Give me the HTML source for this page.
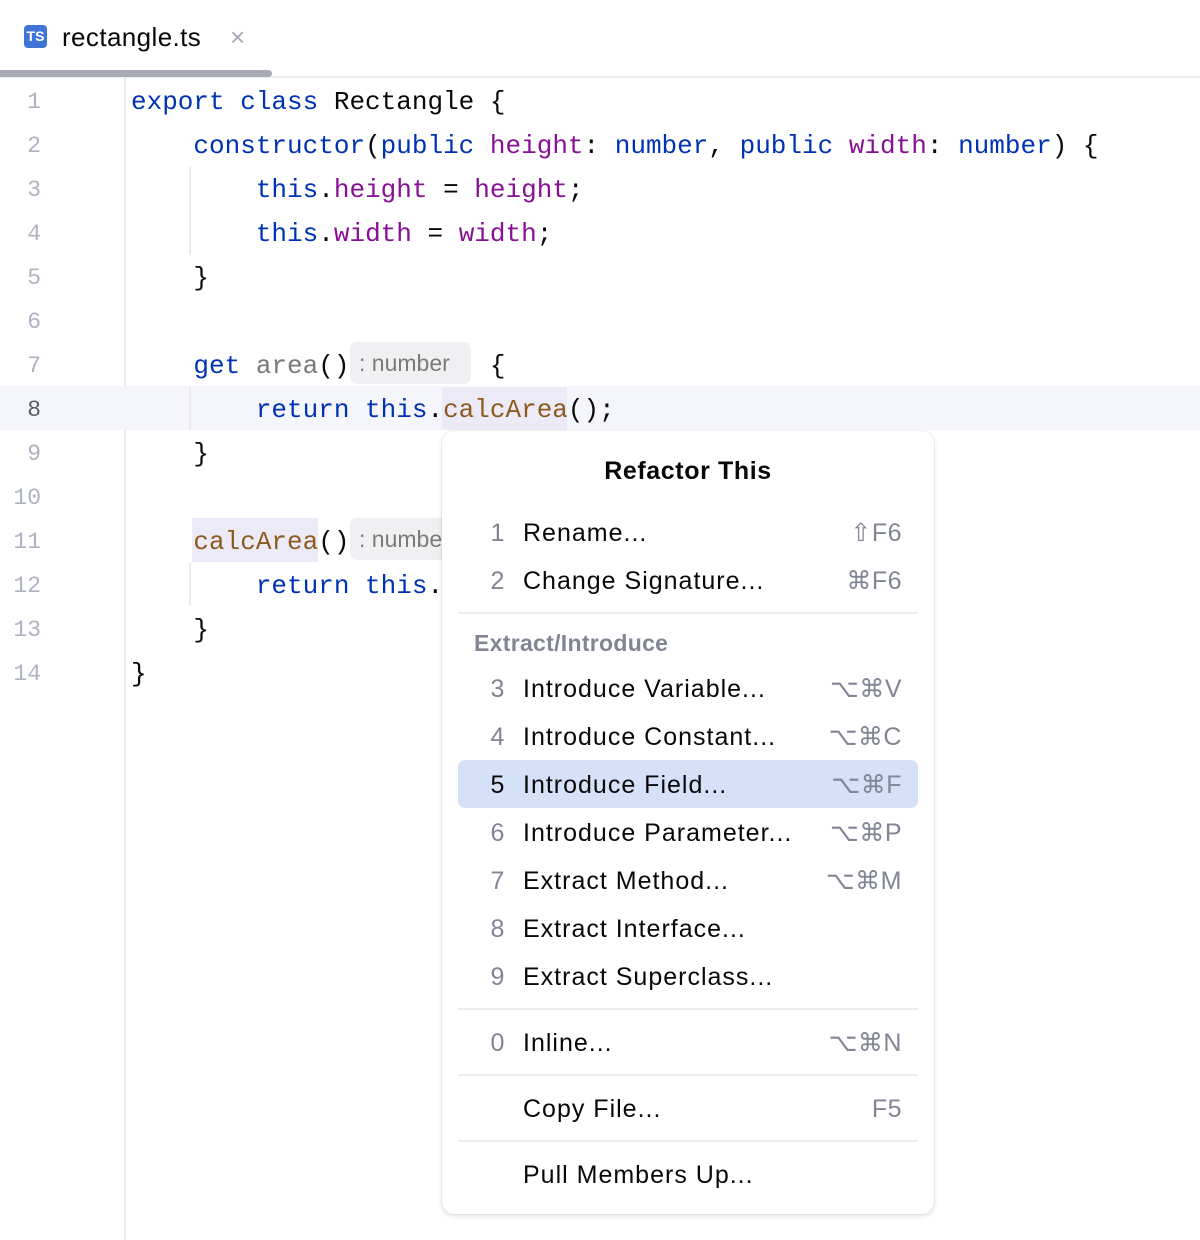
<!DOCTYPE html>
<html><head><meta charset="utf-8"><style>
*{margin:0;padding:0;box-sizing:border-box}
body{width:1200px;height:1240px;background:#fff;position:relative;overflow:hidden;font-family:"Liberation Sans",sans-serif}
.abs{position:absolute}
.code{position:absolute;left:131px;font-family:"Liberation Mono",monospace;font-size:26px;height:44px;line-height:44px;white-space:pre;color:#080808}
.ln{position:absolute;left:0;width:41px;text-align:right;font-family:"Liberation Mono",monospace;font-size:23px;height:44px;line-height:44px;color:#aeb3c2}
.k{color:#0033b3}.p{color:#871094}.m{color:#8c5a1e}.g{color:#7a7a7a}
.hint{position:absolute;background:#f0f0f2;border-radius:7px;color:#7a7a7a;font-size:23px;height:42px;line-height:42px;padding-left:9px;overflow:hidden;white-space:nowrap}
.guide{position:absolute;left:189px;width:2px;background:#ebebef}
.menu{position:absolute;left:442px;top:431px;width:492px;height:783px;background:#fff;border-radius:12px;box-shadow:0 2px 6px rgba(0,0,0,.12),0 0 1px rgba(0,0,0,.2)}
.it{position:absolute;left:0;width:492px;height:48px;line-height:48px;font-size:25px;letter-spacing:1px;color:#080808}
.it .n{position:absolute;left:48px;width:16px;text-align:center;color:#818594}
.it .t{position:absolute;left:81px}
.it .s{position:absolute;right:32px;color:#818594;letter-spacing:.5px}
.sep{position:absolute;left:16px;width:460px;height:2px;background:#ebecf0}
</style></head><body>
<!-- tab -->
<div class="abs" style="left:24px;top:25px;width:23px;height:23px;background:#3f74d8;border-radius:4px;color:#fff;font-size:14px;font-weight:bold;line-height:23px;text-align:center">TS</div>
<div class="abs" style="left:62px;top:22px;font-size:26px;color:#080808;letter-spacing:.4px">rectangle.ts</div>
<div class="abs" style="left:230px;top:22px;font-size:26px;color:#a8abb5">×</div>
<div class="abs" style="left:0;top:76px;width:1200px;height:2px;background:#ebecf0"></div>
<div class="abs" style="left:0;top:70px;width:272px;height:7px;background:#a8abb5;border-radius:0 4px 4px 0"></div>
<!-- gutter line -->
<div class="abs" style="left:124px;top:78px;width:2px;height:1162px;background:#ebecf0"></div>
<!-- current line -->
<div class="abs" style="left:0;top:386px;width:1200px;height:44px;background:#f5f6fc"></div>
<div class="guide" style="top:167px;height:88px"></div>
<div class="guide" style="top:387px;height:43px"></div>
<div class="guide" style="top:563px;height:43px"></div>
<div class="abs" style="left:442px;top:387px;width:125px;height:43px;background:#edeaf8"></div>
<div class="abs" style="left:192px;top:518px;width:126px;height:44px;background:#edeaf8"></div>

<div class="ln" style="top:80px">1</div>
<div class="ln" style="top:124px">2</div>
<div class="ln" style="top:168px">3</div>
<div class="ln" style="top:212px">4</div>
<div class="ln" style="top:256px">5</div>
<div class="ln" style="top:300px">6</div>
<div class="ln" style="top:344px">7</div>
<div class="ln" style="top:388px;color:#5a5d6b">8</div>
<div class="ln" style="top:432px">9</div>
<div class="ln" style="top:476px">10</div>
<div class="ln" style="top:520px">11</div>
<div class="ln" style="top:564px">12</div>
<div class="ln" style="top:608px">13</div>
<div class="ln" style="top:652px">14</div>

<div class="code" style="top:80px"><span class="k">export class</span> Rectangle {</div>
<div class="code" style="top:124px">    <span class="k">constructor</span>(<span class="k">public</span> <span class="p">height</span>: <span class="k">number</span>, <span class="k">public</span> <span class="p">width</span>: <span class="k">number</span>) {</div>
<div class="code" style="top:168px">        <span class="k">this</span>.<span class="p">height</span> = <span class="p">height</span>;</div>
<div class="code" style="top:212px">        <span class="k">this</span>.<span class="p">width</span> = <span class="p">width</span>;</div>
<div class="code" style="top:256px">    }</div>
<div class="code" style="top:344px">    <span class="k">get</span> <span class="g">area</span>()         {</div>
<div class="code" style="top:388px">        <span class="k">return this</span>.<span class="m">calcArea</span>();</div>
<div class="code" style="top:432px">    }</div>
<div class="code" style="top:520px">    <span class="m">calcArea</span>()</div>
<div class="code" style="top:564px">        <span class="k">return this</span>.</div>
<div class="code" style="top:608px">    }</div>
<div class="code" style="top:652px">}</div>
<div class="hint" style="left:350px;top:342px;width:121px">: number</div>
<div class="hint" style="left:350px;top:518px;width:100px">: number</div>

<div class="menu">
<div class="abs" style="left:0;width:492px;top:26px;text-align:center;font-size:25px;font-weight:bold;color:#080808;letter-spacing:.6px">Refactor This</div>
<div class="it" style="top:78px"><span class="n">1</span><span class="t">Rename...</span><span class="s">⇧F6</span></div>
<div class="it" style="top:126px"><span class="n">2</span><span class="t">Change Signature...</span><span class="s">⌘F6</span></div>
<div class="sep" style="top:181px"></div>
<div class="abs" style="left:32px;top:199px;font-size:23px;font-weight:bold;color:#818594;letter-spacing:.3px">Extract/Introduce</div>
<div class="it" style="top:234px"><span class="n">3</span><span class="t">Introduce Variable...</span><span class="s">⌥⌘V</span></div>
<div class="it" style="top:282px"><span class="n">4</span><span class="t">Introduce Constant...</span><span class="s">⌥⌘C</span></div>
<div class="abs" style="left:16px;top:329px;width:460px;height:48px;background:#d5e0f9;border-radius:7px"></div>
<div class="it" style="top:330px"><span class="n" style="color:#080808">5</span><span class="t">Introduce Field...</span><span class="s">⌥⌘F</span></div>
<div class="it" style="top:378px"><span class="n">6</span><span class="t">Introduce Parameter...</span><span class="s">⌥⌘P</span></div>
<div class="it" style="top:426px"><span class="n">7</span><span class="t">Extract Method...</span><span class="s">⌥⌘M</span></div>
<div class="it" style="top:474px"><span class="n">8</span><span class="t">Extract Interface...</span></div>
<div class="it" style="top:522px"><span class="n">9</span><span class="t">Extract Superclass...</span></div>
<div class="sep" style="top:577px"></div>
<div class="it" style="top:588px"><span class="n">0</span><span class="t">Inline...</span><span class="s">⌥⌘N</span></div>
<div class="sep" style="top:643px"></div>
<div class="it" style="top:654px"><span class="t">Copy File...</span><span class="s">F5</span></div>
<div class="sep" style="top:709px"></div>
<div class="it" style="top:720px"><span class="t">Pull Members Up...</span></div>
</div>
</body></html>
